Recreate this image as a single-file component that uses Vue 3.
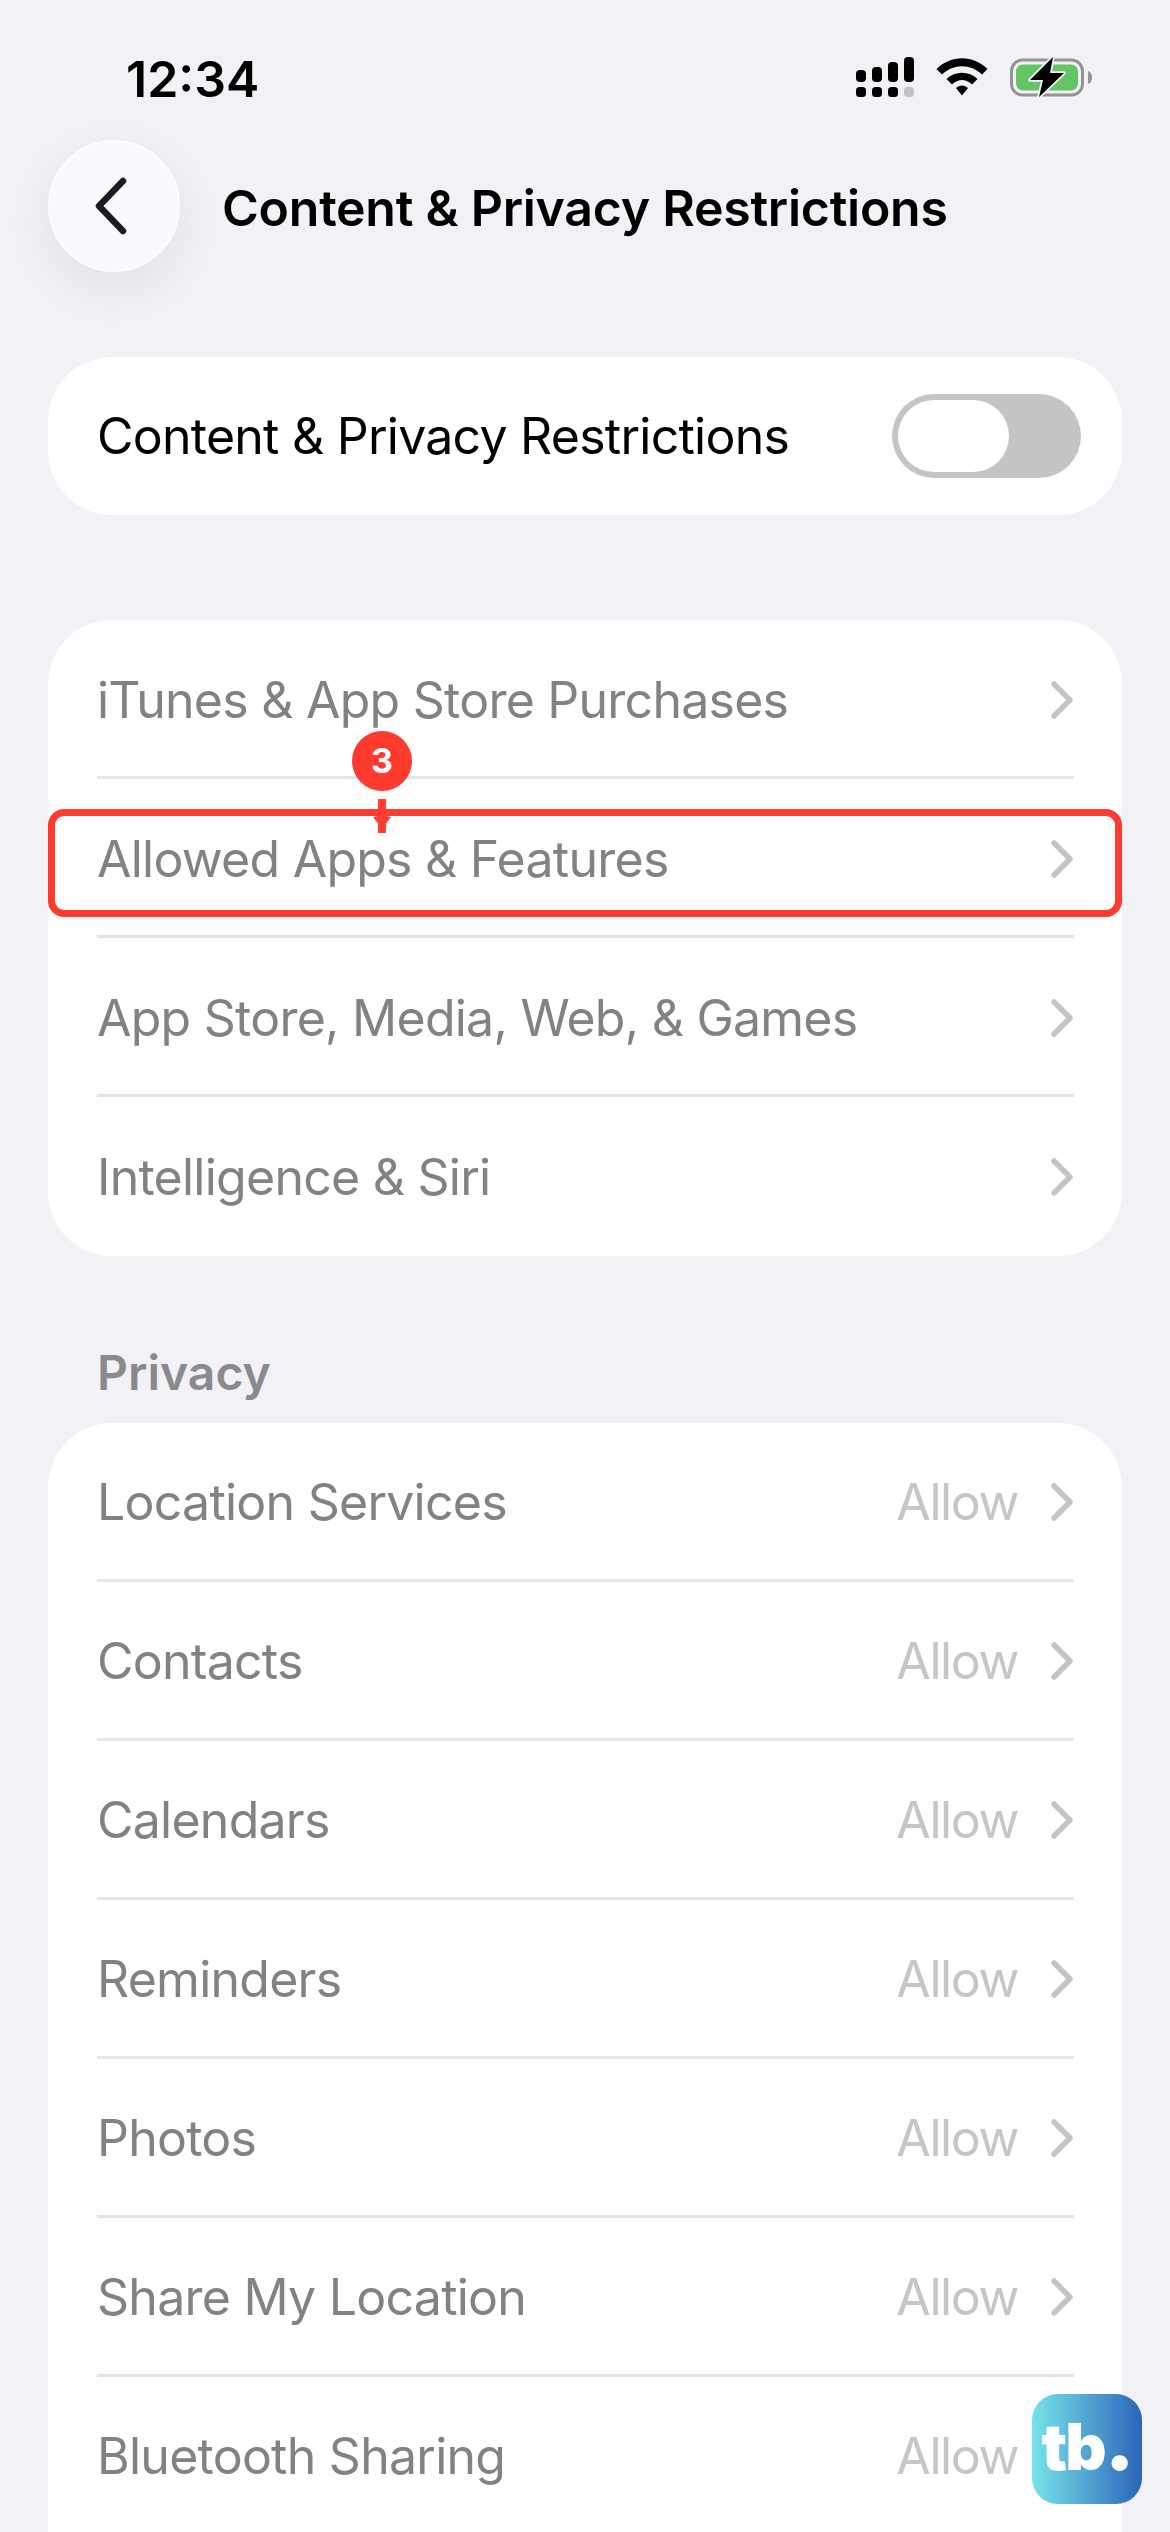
<script setup>
const mainRows = [
  'iTunes & App Store Purchases',
  'Allowed Apps & Features',
  'App Store, Media, Web, & Games',
  'Intelligence & Siri',
]

const privacyRows = [
  'Location Services',
  'Contacts',
  'Calendars',
  'Reminders',
  'Photos',
  'Share My Location',
  'Bluetooth Sharing',
]
</script>

<template>
  <div class="screen">
    <div class="status">
      <span class="time">12:34</span>
      <div class="status-icons">
        <svg class="signal" width="58" height="40" viewBox="0 0 58 40">
          <rect x="0" y="13" width="10" height="12" rx="4" />
          <rect x="16" y="10" width="10" height="15" rx="4" />
          <rect x="32" y="5" width="10" height="20" rx="4" />
          <rect x="48" y="0" width="10" height="25" rx="4" />
          <rect x="0" y="30" width="10" height="10" rx="3.5" />
          <rect x="16" y="30" width="10" height="10" rx="3.5" />
          <rect x="32" y="30" width="10" height="10" rx="3.5" />
          <rect x="48" y="30" width="10" height="10" rx="3.5" fill="#c4c4c8" />
        </svg>
        <svg class="wifi" width="52" height="38" viewBox="0 0 52 38">
          <path d="M0.5 11 C15 -3.5 37 -3.5 51.5 11 L46 16.5 C34.5 5.5 17.5 5.5 6 16.5 Z" />
          <path d="M10.5 21 C19 12.5 33 12.5 41.5 21 L36 26.5 C30 20.5 22 20.5 16 26.5 Z" />
          <path d="M20 30 C23.5 26.5 28.5 26.5 32 30 L26 37.5 Z" />
        </svg>
        <svg class="battery" width="82" height="40" viewBox="0 0 82 40">
          <rect x="1.5" y="3" width="71" height="35" rx="11" fill="none" stroke="#949496" stroke-width="3" />
          <rect x="6" y="7.5" width="62" height="26" rx="7" fill="#65c466" />
          <path d="M78 14 C81 15 82 18 82 20.5 C82 23 81 26 78 27 Z" fill="#949496" />
          <path d="M43 0 L20 23 H33 L29 40 L54 16 H40 Z" fill="#000" stroke="#f1f1f6" stroke-width="3.5" stroke-linejoin="round" paint-order="stroke" />
        </svg>
      </div>
    </div>

    <div class="nav">
      <button class="back">
        <svg width="36" height="60" viewBox="0 0 36 60">
          <path d="M30 5 L6 30 L30 55" fill="none" stroke="#1c1c20" stroke-width="6.5" stroke-linecap="round" stroke-linejoin="round" />
        </svg>
      </button>
      <div class="nav-title">Content &amp; Privacy Restrictions</div>
    </div>

    <div class="card toggle-card">
      <span class="label dark">Content &amp; Privacy Restrictions</span>
      <div class="toggle"><div class="knob"></div></div>
    </div>

    <div class="card main-card">
      <div class="row" v-for="(item, i) in mainRows" :key="item">
        <span class="label">{{ item }}</span>
        <svg class="chev" width="26" height="40" viewBox="0 0 26 40">
          <path d="M6 4 L22 20 L6 36" fill="none" stroke="#c4c4c6" stroke-width="5.5" stroke-linecap="round" stroke-linejoin="round" />
        </svg>
        <template v-if="i == 1">
          <div class="highlight"></div>
          <div class="stem"></div>
          <div class="badge">3</div>
        </template>
      </div>
    </div>

    <div class="section-head">Privacy</div>

    <div class="card privacy-card">
      <div class="row" v-for="item in privacyRows" :key="item">
        <span class="label">{{ item }}</span>
        <span class="allow">Allow</span>
        <svg class="chev" width="26" height="40" viewBox="0 0 26 40">
          <path d="M6 4 L22 20 L6 36" fill="none" stroke="#c4c4c6" stroke-width="5.5" stroke-linecap="round" stroke-linejoin="round" />
        </svg>
      </div>
    </div>

    <div class="logo">tb<span class="logo-dot">.</span></div>
  </div>
</template>

<style scoped>
.screen {
  position: relative;
  width: 1170px;
  height: 2532px;
  overflow: hidden;
  background: #f1f1f6;
  font-family: Inter, "Liberation Sans", sans-serif;
  color: #000;
}

.status {
  height: 140px;
  box-sizing: border-box;
  padding: 57px 78px 0 126px;
  display: flex;
  justify-content: space-between;
  align-items: flex-start;
}

.time {
  font-size: 50px;
  font-weight: 600;
  line-height: 44px;
}

.status-icons {
  display: flex;
  align-items: flex-start;
}

.wifi {
  margin-left: 22px;
  margin-top: 1px;
}

.battery {
  margin-left: 22px;
}

.nav {
  height: 132px;
  padding-left: 48px;
  display: flex;
  align-items: center;
}

.back {
  width: 132px;
  height: 132px;
  padding: 0 6px 0 0;
  border: 2px solid #fdfdff;
  border-radius: 50%;
  background: #faf9fe;
  box-shadow: 0 16px 50px rgba(0, 0, 0, 0.07);
  display: flex;
  align-items: center;
  justify-content: center;
}

.nav-title {
  margin-left: 42px;
  padding-top: 3px;
  font-size: 50px;
  font-weight: 600;
  letter-spacing: -0.25px;
}

.card {
  margin: 0 48px;
  background: #fff;
  border-radius: 64px;
  overflow: hidden;
}

.toggle-card {
  margin-top: 85px;
  height: 158px;
  padding: 0 41px 0 49px;
  display: flex;
  align-items: center;
  justify-content: space-between;
}

.toggle {
  width: 189px;
  height: 84px;
  box-sizing: border-box;
  padding: 6px;
  border-radius: 42px;
  background: #c5c5c7;
}

.knob {
  width: 111px;
  height: 72px;
  border-radius: 36px;
  background: #fff;
}

.main-card {
  margin-top: 105px;
  overflow: visible;
}

.privacy-card {
  margin-top: 24px;
  border-radius: 64px 64px 0 0;
}

.row {
  position: relative;
  height: 159px;
  box-sizing: border-box;
  margin-left: 49px;
  margin-right: 48px;
  padding-top: 3px;
  border-bottom: 3px solid #e5e5e7;
  display: flex;
  align-items: center;
}

.privacy-card .row {
  padding-top: 1px;
}

.main-card .row:last-child {
  padding-top: 0;
  border-bottom: none;
}

.label {
  font-size: 50px;
  letter-spacing: -0.75px;
  color: #828285;
  flex: 1;
}

.label.dark {
  color: #000;
}

.allow {
  font-size: 50px;
  letter-spacing: -1.4px;
  color: #c6c6c8;
  margin-right: 30px;
}

.chev {
  flex: none;
}

.section-head {
  margin: 91px 0 0 97px;
  height: 52px;
  line-height: 52px;
  font-size: 48px;
  font-weight: 600;
  color: #8a8a8e;
}

.highlight {
  position: absolute;
  left: -49px;
  right: -48px;
  top: 30px;
  height: 108px;
  box-sizing: border-box;
  border: 7px solid #ff3b30;
  border-radius: 16px;
}

.badge {
  position: absolute;
  left: 255px;
  top: -48px;
  width: 60px;
  height: 60px;
  border-radius: 50%;
  background: #ff3b30;
  color: #fff;
  font-size: 34px;
  font-weight: 700;
  line-height: 60px;
  text-align: center;
}

.stem {
  position: absolute;
  left: 276px;
  top: 20px;
  width: 18px;
  height: 34px;
  background: #ff3b30;
  clip-path: polygon(28% 0, 72% 0, 72% 50%, 100% 53%, 72% 72%, 72% 100%, 28% 100%, 28% 72%, 0 53%, 28% 50%);
}

.logo {
  position: absolute;
  left: 1032px;
  top: 2394px;
  width: 110px;
  height: 110px;
  border-radius: 26px;
  background: linear-gradient(90deg, #72e3e9, #2460b8);
  opacity: 0.96;
  color: #fff;
  font-size: 64px;
  font-weight: 900;
  line-height: 106px;
  letter-spacing: -2px;
  text-align: center;
}

.logo-dot {
  font-size: 80px;
  line-height: 60px;
}
</style>
